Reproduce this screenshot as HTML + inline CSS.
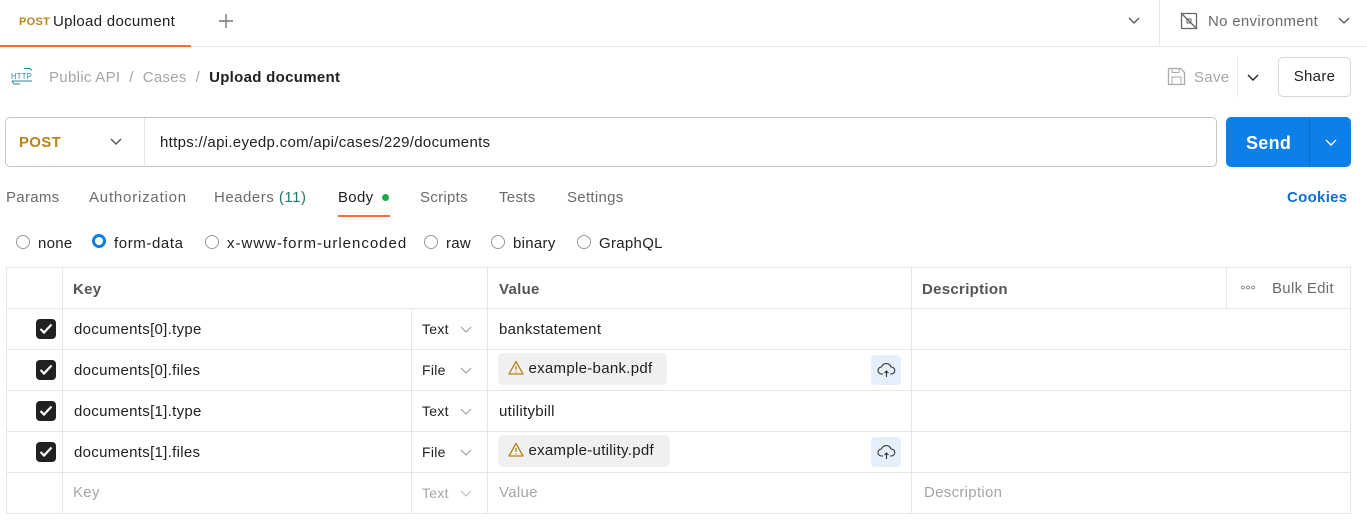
<!DOCTYPE html>
<html><head><style>
*{box-sizing:border-box;margin:0;padding:0}
body{width:1367px;height:522px;overflow:hidden;background:#fff;font-family:"Liberation Sans",sans-serif;font-size:14px;color:#212121;position:relative;letter-spacing:0.3px}
.a{position:absolute;white-space:nowrap}
.g{color:#6b6b6b}
.l{position:absolute;background:#e6e6e6}
.cb{position:absolute;left:36px;width:20px;height:20px;background:#212121;border-radius:4px}
.cb svg{position:absolute;left:3px;top:4px}
.rad{position:absolute;width:14px;height:14px;border:1px solid #999;border-radius:50%}
.chev{position:absolute}
.pill{position:absolute;height:32px;background:#f0f0f0;border-radius:5px;padding:0 10px 0 10px;line-height:32px;font-size:15px}
.up{position:absolute;width:30px;height:30px;background:#e6f0fc;border-radius:4px}
</style></head><body>
<!-- tab bar -->
<div class="a" style="left:19px;top:16px;font-size:11px;font-weight:bold;color:#b7851b">POST</div>
<div class="a" style="left:53px;top:13px;font-size:15px">Upload document</div>
<div class="l" style="left:0;top:46px;width:1367px;height:1px"></div>
<div class="a" style="left:0;top:45px;width:191px;height:2px;background:#ff6c37"></div>
<svg class="a" style="left:218px;top:13px" width="16" height="16"><path d="M8 1v14M1 8h14" stroke="#777" stroke-width="1.4"/></svg>
<svg class="a chev" style="left:1128px;top:17px" width="12" height="8"><path d="M1 1l5 5 5-5" stroke="#555" fill="none" stroke-width="1.3"/></svg>
<div class="l" style="left:1159px;top:0;width:1px;height:46px"></div>
<svg class="a" style="left:1180px;top:12px" width="18" height="18"><rect x="1.5" y="1.5" width="15" height="15" rx="1" fill="none" stroke="#666" stroke-width="1.3"/><path d="M1 1l16 16" stroke="#666" stroke-width="1.3"/><rect x="7" y="7" width="4" height="4" fill="none" stroke="#666"/></svg>
<div class="a g" style="left:1208px;top:13px;font-size:15px">No environment</div>
<svg class="a chev" style="left:1338px;top:17px" width="12" height="8"><path d="M1 1l5 5 5-5" stroke="#555" fill="none" stroke-width="1.3"/></svg>
<!-- breadcrumb -->
<svg class="a" style="left:11px;top:67px" width="22" height="20"><path d="M13 1.5h6l2 2" stroke="#2b8a9e" fill="none"/><text x="0" y="12" font-size="8" textLength="21" lengthAdjust="spacingAndGlyphs" font-family="Liberation Sans" fill="#2b8a9e">HTTP</text><path d="M1 14h20M1 14l2 3h6" stroke="#2b8a9e" fill="none"/></svg>
<div class="a" style="left:49px;top:69px;font-size:15px;color:#a6a6a6">Public API&nbsp; / &nbsp;Cases&nbsp; / &nbsp;<span style="color:#212121;font-weight:bold">Upload document</span></div>
<svg class="a" style="left:1167px;top:67px" width="19" height="19"><path d="M1.5 1.5h12l4 4v12h-16z" fill="none" stroke="#aaa" stroke-width="1.3"/><rect x="5" y="1.5" width="7" height="4" fill="none" stroke="#aaa"/><rect x="5" y="10" width="9" height="7.5" fill="none" stroke="#aaa"/></svg>
<div class="a" style="left:1194px;top:69px;font-size:15px;color:#a6a6a6">Save</div>
<div class="l" style="left:1237px;top:57px;width:1px;height:40px"></div>
<svg class="a chev" style="left:1247px;top:74px" width="12" height="8"><path d="M1 1l5 5 5-5" stroke="#212121" fill="none" stroke-width="1.4"/></svg>
<div class="a" style="left:1278px;top:57px;width:73px;height:40px;border:1px solid #d6d6d6;border-radius:5px;text-align:center;line-height:38px;font-size:15px">Share</div>
<!-- url -->
<div class="a" style="left:5px;top:117px;width:1212px;height:50px;border:1px solid #c4c4c4;border-radius:5px"></div>
<div class="l" style="left:144px;top:118px;width:1px;height:48px"></div>
<div class="a" style="left:19px;top:134px;font-size:15px;font-weight:bold;color:#b7851b">POST</div>
<svg class="a chev" style="left:110px;top:138px" width="12" height="8"><path d="M1 1l5 5 5-5" stroke="#555" fill="none" stroke-width="1.4"/></svg>
<div class="a" style="left:160px;top:134px;font-size:15px">https://api.eyedp.com/api/cases/229/documents</div>
<div class="a" style="left:1226px;top:117px;width:125px;height:50px;background:#0c7fe8;border-radius:5px"></div>
<div class="a" style="left:1309px;top:117px;width:1px;height:50px;background:#0a6cc6"></div>
<div class="a" style="left:1246px;top:133px;font-size:18px;font-weight:bold;color:#fff">Send</div>
<svg class="a chev" style="left:1325px;top:139px" width="12" height="8"><path d="M1 1l5 5 5-5" stroke="#fff" fill="none" stroke-width="1.4"/></svg>
<!-- tabs -->
<div class="a g" style="left:6px;top:189px;font-size:15px">Params</div>
<div class="a g" style="left:89px;top:189px;font-size:15px;letter-spacing:0.8px">Authorization</div>
<div class="a g" style="left:214px;top:189px;font-size:15px;letter-spacing:0.5px">Headers <span style="color:#1f7a6b">(11)</span></div>
<div class="a" style="left:338px;top:189px;font-size:15px">Body</div>
<div class="a" style="left:382px;top:194px;width:7px;height:7px;border-radius:50%;background:#1fa94b"></div>
<div class="a" style="left:338px;top:215px;width:52px;height:2px;background:#ff6c37"></div>
<div class="a g" style="left:420px;top:189px;font-size:15px">Scripts</div>
<div class="a g" style="left:499px;top:189px;font-size:15px">Tests</div>
<div class="a g" style="left:567px;top:189px;font-size:15px">Settings</div>
<div class="a" style="left:1287px;top:189px;font-size:15px;font-weight:bold;color:#0c6fd1">Cookies</div>
<!-- radios -->
<div class="rad" style="left:16px;top:235px"></div><div class="a" style="left:38px;top:235px;font-size:15px">none</div>
<div class="rad" style="left:92px;top:234px;border:3px solid #0c7fe8"></div><div class="a" style="left:114px;top:235px;font-size:15px;letter-spacing:0.6px">form-data</div>
<div class="rad" style="left:205px;top:235px"></div><div class="a" style="left:227px;top:235px;font-size:15px;letter-spacing:1px">x-www-form-urlencoded</div>
<div class="rad" style="left:424px;top:235px"></div><div class="a" style="left:446px;top:235px;font-size:15px">raw</div>
<div class="rad" style="left:491px;top:235px"></div><div class="a" style="left:513px;top:235px;font-size:15px">binary</div>
<div class="rad" style="left:577px;top:235px"></div><div class="a" style="left:599px;top:235px;font-size:15px">GraphQL</div>
<!-- table lines -->
<div class="l" style="left:6px;top:267px;width:1345px;height:1px"></div>
<div class="l" style="left:6px;top:308px;width:1345px;height:1px"></div>
<div class="l" style="left:6px;top:349px;width:1345px;height:1px"></div>
<div class="l" style="left:6px;top:390px;width:1345px;height:1px"></div>
<div class="l" style="left:6px;top:431px;width:1345px;height:1px"></div>
<div class="l" style="left:6px;top:472px;width:1345px;height:1px"></div>
<div class="l" style="left:6px;top:513px;width:1345px;height:1px"></div>
<div class="l" style="left:6px;top:267px;width:1px;height:247px"></div>
<div class="l" style="left:62px;top:267px;width:1px;height:247px"></div>
<div class="l" style="left:411px;top:308px;width:1px;height:206px"></div>
<div class="l" style="left:487px;top:267px;width:1px;height:247px"></div>
<div class="l" style="left:911px;top:267px;width:1px;height:247px"></div>
<div class="l" style="left:1226px;top:267px;width:1px;height:41px"></div>
<div class="l" style="left:1350px;top:267px;width:1px;height:247px"></div>
<div class="a g" style="left:73px;top:281px;font-weight:bold;font-size:15px;color:#555">Key</div>
<div class="a" style="left:499px;top:281px;font-weight:bold;font-size:15px;color:#555">Value</div>
<div class="a" style="left:922px;top:281px;font-weight:bold;font-size:15px;color:#555">Description</div>
<svg class="a" style="left:1241px;top:285px" width="14" height="5"><circle cx="2" cy="2.5" r="1.5" fill="none" stroke="#777" stroke-width="0.8"/><circle cx="7" cy="2.5" r="1.5" fill="none" stroke="#777" stroke-width="0.8"/><circle cx="12" cy="2.5" r="1.5" fill="none" stroke="#777" stroke-width="0.8"/></svg>
<div class="a g" style="left:1272px;top:280px;font-size:15px">Bulk Edit</div>
<!-- rows -->
<div class="cb" style="top:319px"><svg width="14" height="12"><path d="M1.5 6l3.5 3.5 7.5-8" stroke="#fff" stroke-width="2.2" fill="none"/></svg></div>
<div class="cb" style="top:360px"><svg width="14" height="12"><path d="M1.5 6l3.5 3.5 7.5-8" stroke="#fff" stroke-width="2.2" fill="none"/></svg></div>
<div class="cb" style="top:401px"><svg width="14" height="12"><path d="M1.5 6l3.5 3.5 7.5-8" stroke="#fff" stroke-width="2.2" fill="none"/></svg></div>
<div class="cb" style="top:442px"><svg width="14" height="12"><path d="M1.5 6l3.5 3.5 7.5-8" stroke="#fff" stroke-width="2.2" fill="none"/></svg></div>
<div class="a" style="left:74px;top:321px;font-size:15px">documents[0].type</div>
<div class="a" style="left:74px;top:362px;font-size:15px">documents[0].files</div>
<div class="a" style="left:74px;top:403px;font-size:15px">documents[1].type</div>
<div class="a" style="left:74px;top:444px;font-size:15px">documents[1].files</div>
<div class="a" style="left:73px;top:484px;font-size:15px;color:#a6a6a6">Key</div>
<div class="a" style="left:422px;top:321px">Text</div>
<div class="a" style="left:422px;top:362px">File</div>
<div class="a" style="left:422px;top:403px">Text</div>
<div class="a" style="left:422px;top:444px">File</div>
<div class="a" style="left:422px;top:485px;color:#a6a6a6">Text</div>
<svg class="a" style="left:460px;top:326px" width="12" height="7"><path d="M1 1l5 5 5-5" stroke="#999" fill="none"/></svg>
<svg class="a" style="left:460px;top:367px" width="12" height="7"><path d="M1 1l5 5 5-5" stroke="#999" fill="none"/></svg>
<svg class="a" style="left:460px;top:408px" width="12" height="7"><path d="M1 1l5 5 5-5" stroke="#999" fill="none"/></svg>
<svg class="a" style="left:460px;top:449px" width="12" height="7"><path d="M1 1l5 5 5-5" stroke="#999" fill="none"/></svg>
<svg class="a" style="left:460px;top:490px" width="12" height="7"><path d="M1 1l5 5 5-5" stroke="#bbb" fill="none"/></svg>
<div class="a" style="left:499px;top:321px;font-size:15px">bankstatement</div>
<div class="pill" style="left:498px;top:353px;width:169px"><svg style="vertical-align:-2px" width="16" height="15"><path d="M8 1.5L15 14H1z" fill="none" stroke="#b7851b" stroke-width="1.3" stroke-linejoin="round"/><path d="M8 6v4M8 11.5v1" stroke="#b7851b" stroke-width="1.3"/></svg> example-bank.pdf</div>
<div class="up" style="left:871px;top:355px"><svg style="position:absolute;left:6px;top:7px" width="19" height="16"><path d="M6 12H4.5a3.5 3.5 0 010-7 5 5 0 019.5 0 3.5 3.5 0 01.5 7H13M9.5 9v6M7.5 11l2-2 2 2" stroke="#333" fill="none" stroke-width="1.1"/></svg></div>
<div class="a" style="left:499px;top:403px;font-size:15px">utilitybill</div>
<div class="pill" style="left:498px;top:435px;width:172px"><svg style="vertical-align:-2px" width="16" height="15"><path d="M8 1.5L15 14H1z" fill="none" stroke="#b7851b" stroke-width="1.3" stroke-linejoin="round"/><path d="M8 6v4M8 11.5v1" stroke="#b7851b" stroke-width="1.3"/></svg> example-utility.pdf</div>
<div class="up" style="left:871px;top:437px"><svg style="position:absolute;left:6px;top:7px" width="19" height="16"><path d="M6 12H4.5a3.5 3.5 0 010-7 5 5 0 019.5 0 3.5 3.5 0 01.5 7H13M9.5 9v6M7.5 11l2-2 2 2" stroke="#333" fill="none" stroke-width="1.1"/></svg></div>
<div class="a" style="left:499px;top:484px;font-size:15px;color:#a6a6a6">Value</div>
<div class="a" style="left:924px;top:484px;font-size:15px;color:#a6a6a6">Description</div>
</body></html>
